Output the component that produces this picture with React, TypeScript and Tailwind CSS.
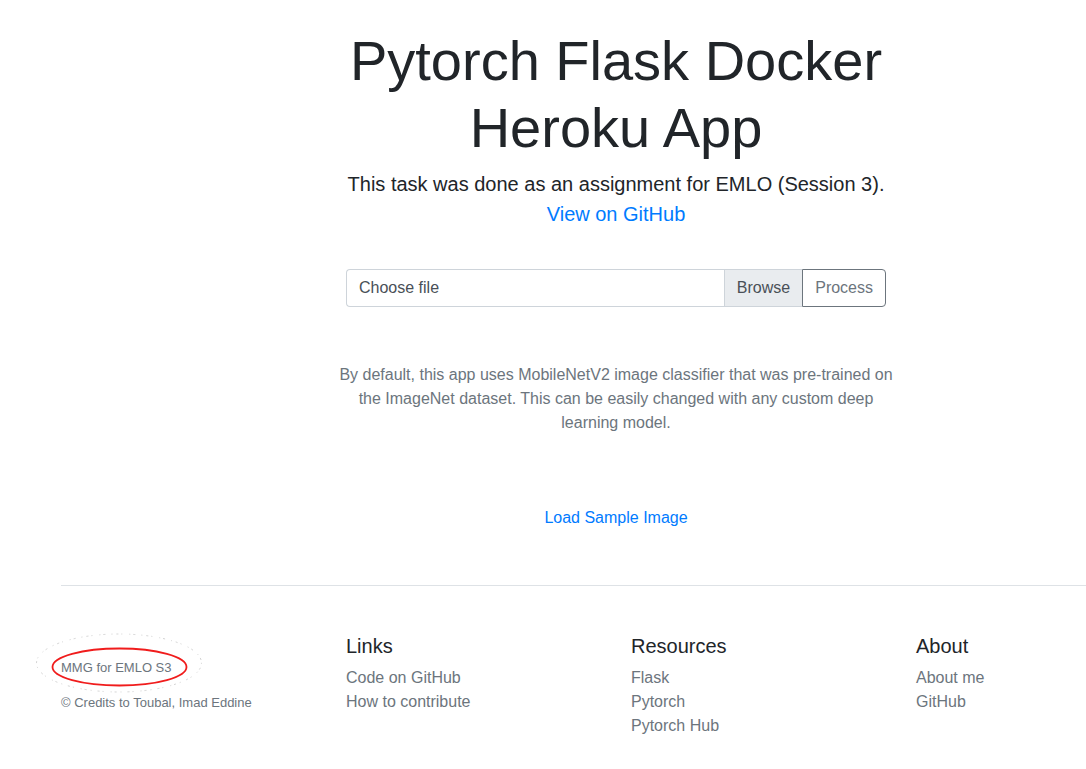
import { useState } from "react";

const linkGroups = [
  { title: "Links", items: ["Code on GitHub", "How to contribute"] },
  { title: "Resources", items: ["Flask", "Pytorch", "Pytorch Hub"] },
  { title: "About", items: ["About me", "GitHub"] },
];

function UploadForm() {
  const [fileName, setFileName] = useState("Choose file");
  return (
    <form className="flex px-4" onSubmit={(e) => e.preventDefault()}>
      <input
        id="image-file"
        type="file"
        accept="image/*"
        className="peer sr-only"
        onChange={(e) => setFileName(e.target.files?.[0]?.name ?? "Choose file")}
      />
      <label
        htmlFor="image-file"
        className="flex h-[38px] min-w-0 flex-1 cursor-pointer overflow-hidden rounded-l border border-r-0 border-[#ced4da] text-left text-[#495057] peer-focus:border-[#80bdff]"
      >
        <span className="min-w-0 flex-1 truncate px-3 py-1.5">{fileName}</span>
        <span className="border-l border-[#ced4da] bg-[#e9ecef] px-3 py-1.5">Browse</span>
      </label>
      <button
        type="submit"
        className="h-[38px] cursor-pointer rounded-r border border-[#6c757d] px-3 text-[#6c757d] hover:bg-[#6c757d] hover:text-white"
      >
        Process
      </button>
    </form>
  );
}

function HandDrawnRing() {
  return (
    <svg
      aria-hidden="true"
      viewBox="0 0 168 60"
      className="pointer-events-none absolute -top-[25px] -left-[26px] h-[60px] w-[168px]"
      fill="none"
    >
      <ellipse
        cx="84"
        cy="30"
        rx="82.5"
        ry="29"
        stroke="#d2d2d2"
        strokeWidth="1"
        strokeDasharray="1 4 2 3 1 7 1 3 2 6"
      />
      <ellipse cx="84.5" cy="34" rx="67" ry="18.5" stroke="#f01c1c" strokeWidth="1.8" />
    </svg>
  );
}

export default function App() {
  return (
    <div className="overflow-hidden bg-white font-['Liberation_Sans',Arial,sans-serif] text-base text-[#212529]">
      <div className="-mr-[85px] ml-[61px]">
        <main className="mx-auto max-w-[572px] pt-[27px] text-center">
          <h1 className="mb-2 text-[56px] leading-[67px]">Pytorch Flask Docker Heroku App</h1>
          <p className="mb-10 text-xl leading-[30px]">
            This task was done as an assignment for EMLO (Session 3).
            <br />
            <a href="#github" className="text-[#007bff] hover:underline">
              View on GitHub
            </a>
          </p>
          <UploadForm />
          <p className="mt-14 text-[#6c757d]">
            By default, this app uses MobileNetV2 image classifier that was pre-trained on the
            ImageNet dataset. This can be easily changed with any custom deep learning model.
          </p>
          <p className="mt-[71px]">
            <a href="#sample" className="text-[#007bff] hover:underline">
              Load Sample Image
            </a>
          </p>
        </main>

        <footer className="mt-[55px] grid grid-cols-4 gap-[30px] border-t border-[#dee2e6] pt-12 pb-8">
          <div className="pt-6 text-[13px] leading-[19px] text-[#6c757d]">
            <p className="relative mb-4">
              MMG for EMLO S3
              <HandDrawnRing />
            </p>
            <p>© Credits to Toubal, Imad Eddine</p>
          </div>
          {linkGroups.map((group) => (
            <nav key={group.title} aria-label={group.title}>
              <h2 className="mb-2 text-xl leading-6">{group.title}</h2>
              <ul>
                {group.items.map((item) => (
                  <li key={item}>
                    <a href="#" className="text-[#6c757d] hover:underline">
                      {item}
                    </a>
                  </li>
                ))}
              </ul>
            </nav>
          ))}
        </footer>
      </div>
    </div>
  );
}
